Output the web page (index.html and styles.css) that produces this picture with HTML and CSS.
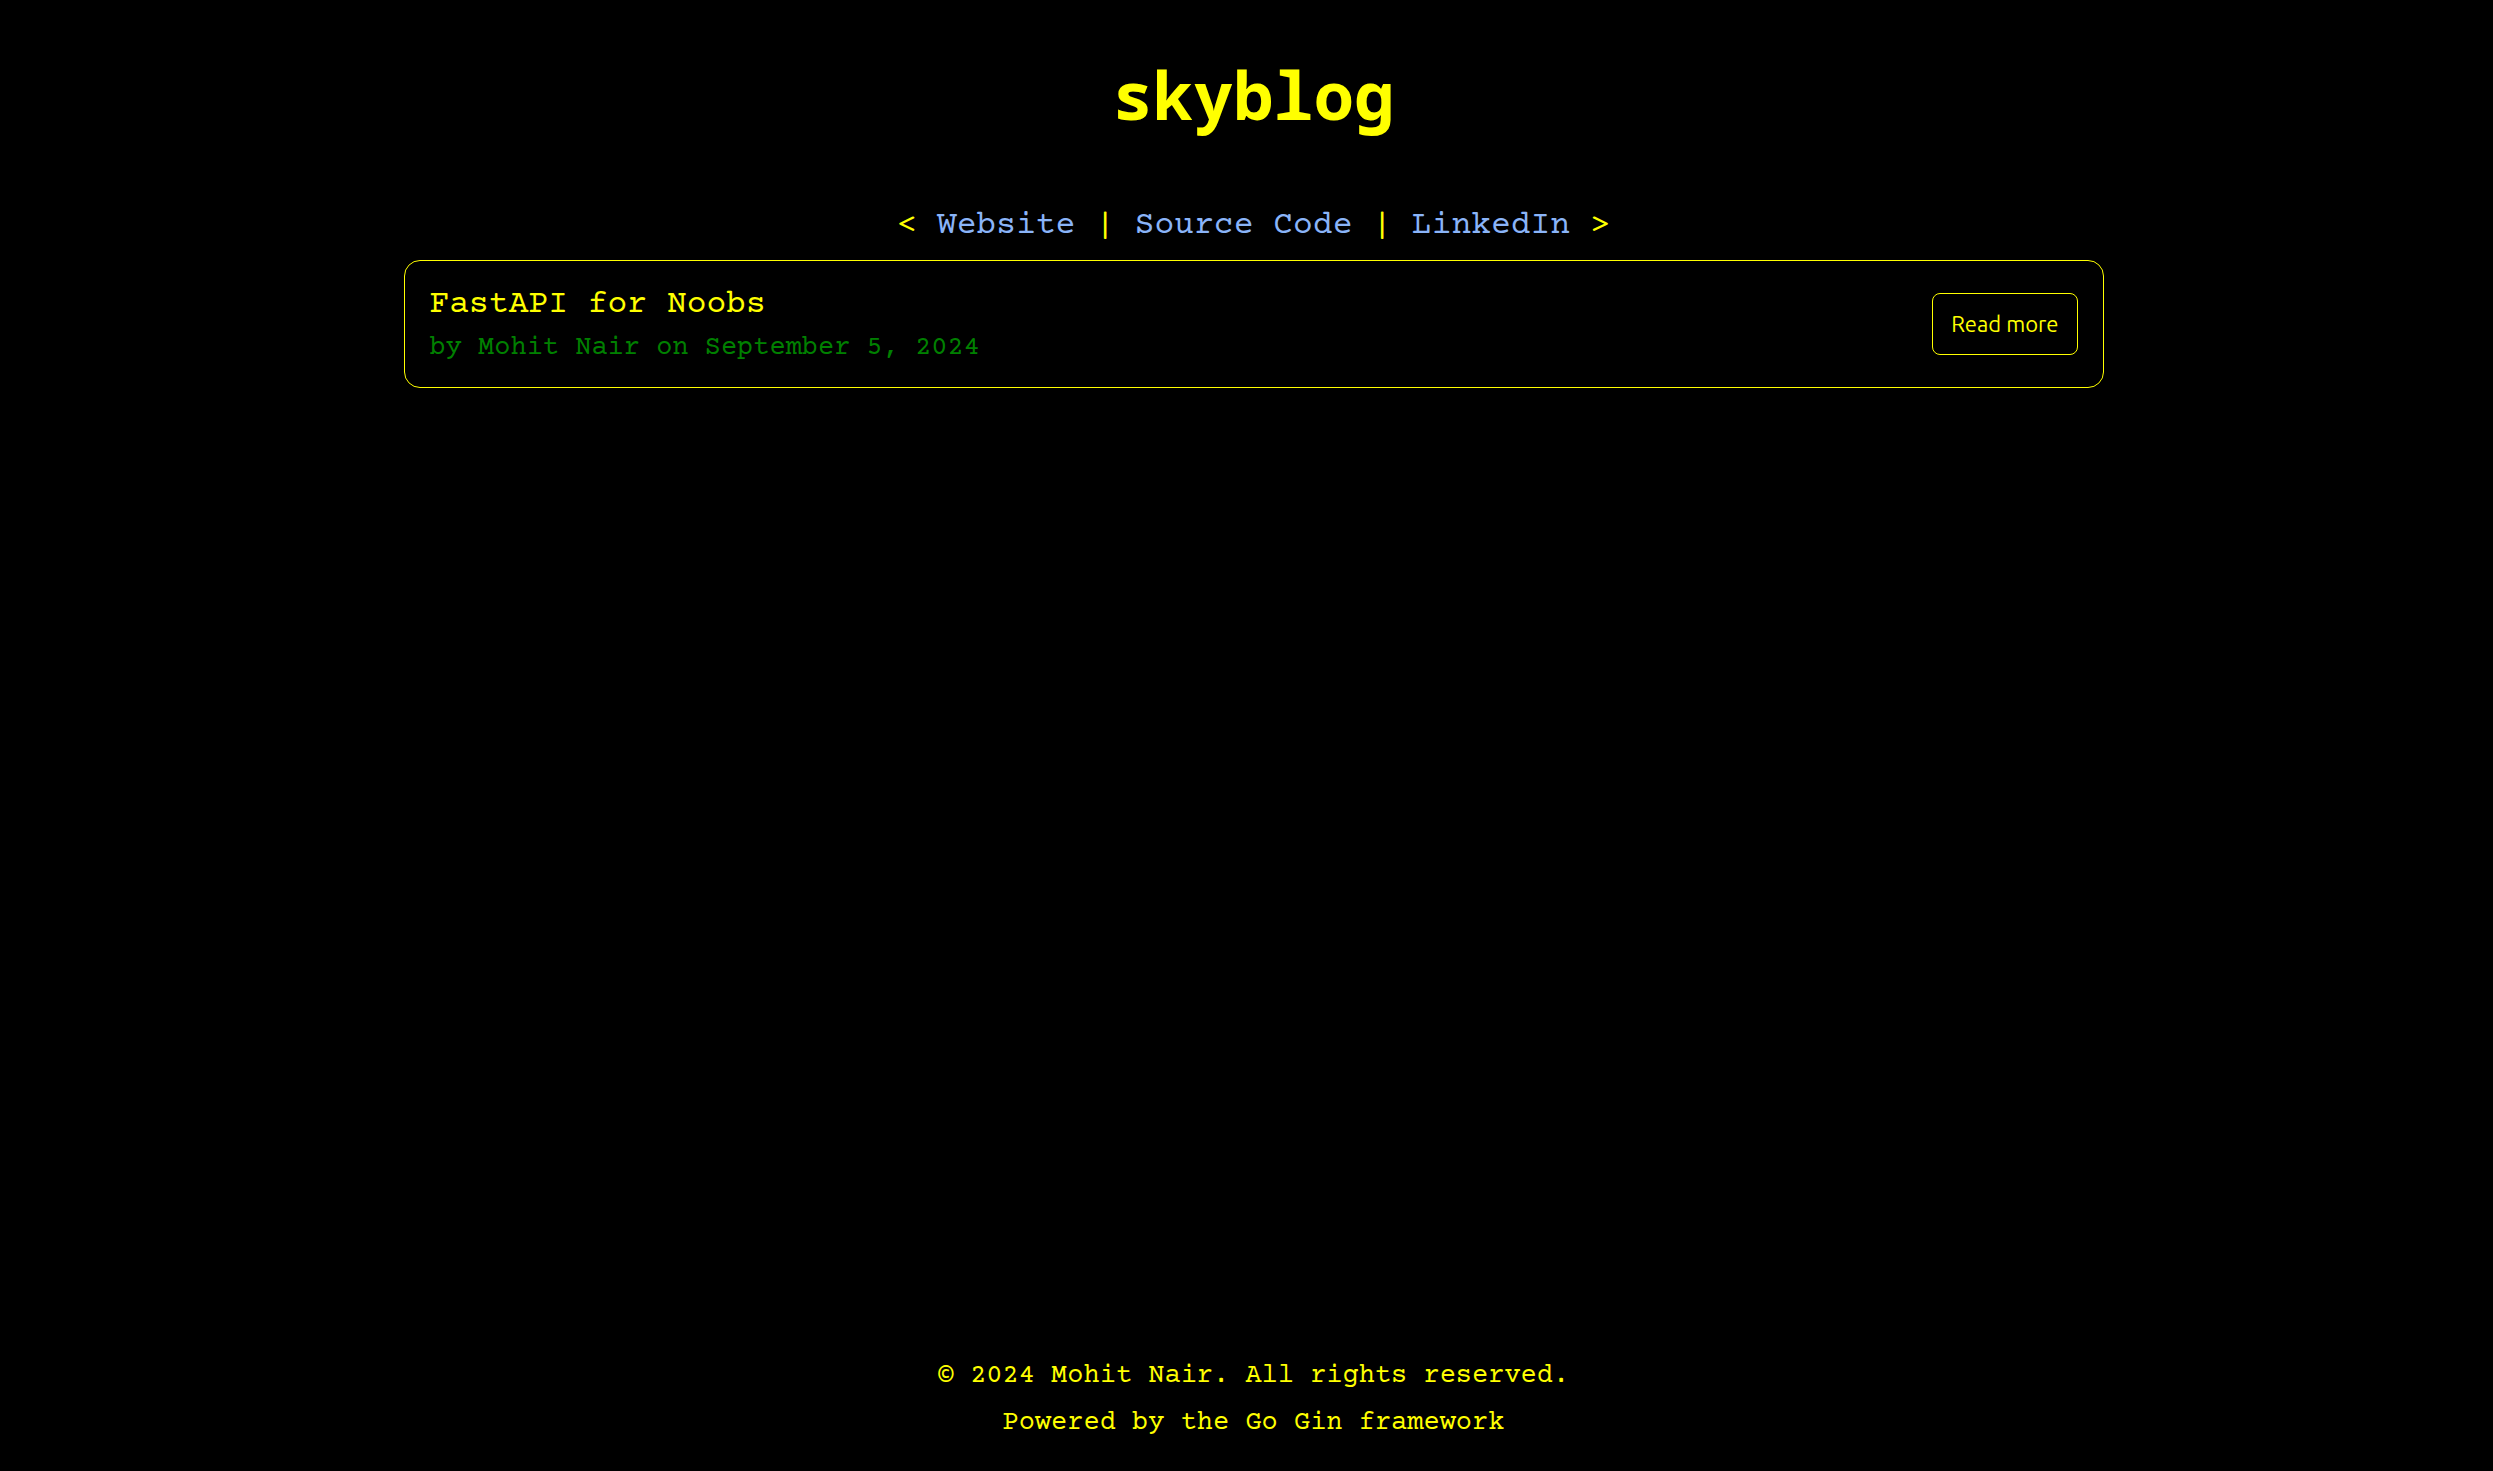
FILE: index.html
```html
<!DOCTYPE html>
<html lang="en">
<head>
<meta charset="utf-8">
<title>skyblog</title>
<link rel="stylesheet" href="styles.css">
</head>
<body>
<header class="header">
<h1 class="title">skyblog</h1>
<nav class="nav">&lt; <a href="#">Website</a> | <a href="#">Source Code</a> | <a href="#">LinkedIn</a> &gt;</nav>
</header>
<main class="posts">
<article class="post">
<div class="post-text">
<h2 class="post-title">FastAPI for Noobs</h2>
<p class="post-meta">by Mohit Nair on September 5, 2024</p>
</div>
<button class="read-more" type="button">Read more</button>
</article>
</main>
<footer class="footer">
<p>© 2024 Mohit Nair. All rights reserved.</p>
<p>Powered by the Go Gin framework</p>
</footer>
</body>
</html>
```
FILE: styles.css
```css
* { box-sizing: border-box; }

body {
  display: flex;
  flex-direction: column;
  align-items: center;
  min-height: 100vh;
  margin: 0;
  padding: 48px 16px 24px 30px;
  background: #000;
  color: #ff0;
  font-family: "Courier Prime", "Liberation Mono", "Courier New", monospace;
}

.header { text-align: center; }

.title {
  margin: 0 0 62px;
  font: bold 67px/92px "Noto Sans Mono", "DejaVu Sans Mono", monospace;
}

.nav {
  font-size: 33px;
  line-height: 48px;
}

.nav a {
  color: #8ab4f8;
  text-decoration: none;
}

.posts {
  width: 100%;
  max-width: 1700px;
  margin-top: 10px;
}

.post {
  display: flex;
  align-items: center;
  justify-content: space-between;
  padding: 0 25px;
  border: 1px solid #ff0;
  border-radius: 16px;
}

.post-text { padding: 22px 0 18px; }

.post-title {
  margin: 0;
  font-size: 33px;
  font-weight: normal;
  line-height: 44px;
}

.post-meta {
  margin: 0;
  color: green;
  font-size: 27px;
  line-height: 42px;
}

.read-more {
  padding: 16px 18px;
  border: 1px solid #ff0;
  border-radius: 8px;
  background: #000;
  color: #ff0;
  font: 22px/28px Ubuntu, "Noto Sans", sans-serif;
}

.footer {
  margin-top: auto;
  font-size: 27px;
  line-height: 47px;
  text-align: center;
}

.footer p { margin: 0; }
```
